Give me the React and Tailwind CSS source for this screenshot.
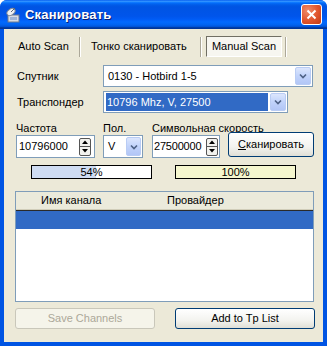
import React from 'react';

const titleGradient =
  'bg-[linear-gradient(to_bottom,#0058EE_0%,#3593FF_4%,#288EFF_6%,#127DFF_8%,#036FFC_10%,#0262EE_14%,#0057E5_20%,#0054E3_24%,#0055EB_56%,#005BF5_66%,#026AFE_76%,#0062EF_86%,#0052D6_92%,#0040AB_94%,#003092_100%)]';

const DropArrow = ({ className = '' }) => (
  <div
    className={`flex items-center justify-center rounded-[2px] border border-[#B9CCF4] bg-[linear-gradient(to_bottom,#DCE6FD,#C1D3FB_50%,#B2C6F6)] ${className}`}
  >
    <svg width="8" height="6" viewBox="0 0 8 6">
      <path d="M1 1.5 L4 4.5 L7 1.5" fill="none" stroke="#4D6185" strokeWidth="1.6" />
    </svg>
  </div>
);

const Spin = ({ className = '' }) => (
  <div className={`w-[12px] h-[18px] flex flex-col rounded-[2px] border border-[#555] bg-[#F2F2EE] ${className}`}>
    <div className="flex-1 flex items-center justify-center border-b border-[#555]">
      <svg width="6" height="4" viewBox="0 0 6 4">
        <path d="M0 4 L3 0.5 L6 4 Z" fill="#000" />
      </svg>
    </div>
    <div className="flex-1 flex items-center justify-center">
      <svg width="6" height="4" viewBox="0 0 6 4">
        <path d="M0 0 L3 3.5 L6 0 Z" fill="#000" />
      </svg>
    </div>
  </div>
);

const Sep = () => <div className="w-[2px] h-[20px] border-l border-[#ACA899] border-r border-r-white" />;

const XpButton = ({ children, disabled, className = '' }) => (
  <div
    className={`flex items-center justify-center rounded-[3px] border ${
      disabled
        ? 'border-[#C9C7BA] text-[#ACA899] bg-[#F5F4EA]'
        : 'border-[#003C74] text-black bg-[linear-gradient(to_bottom,#FFFFFF,#F3F3EF_60%,#E0DFD6)]'
    } ${className}`}
  >
    {children}
  </div>
);

export default function App() {
  return (
    <div className="w-[327px] h-[346px] flex flex-col bg-[#0054E3] rounded-t-[7px] overflow-hidden font-['Liberation_Sans',sans-serif] text-[11px] text-black select-none">
      {/* title bar */}
      <div className={`h-[29px] flex items-center pl-[5px] pr-[5px] ${titleGradient}`}>
        <svg width="16" height="16" viewBox="0 0 16 16" className="mt-[1px]">
          <rect x="3" y="8" width="11" height="7" fill="#D8DCE4" stroke="#6E7A8C" strokeWidth="1" />
          <rect x="5" y="10" width="7" height="3" fill="#9FB4D6" />
          <ellipse cx="6" cy="5" rx="4.5" ry="3" transform="rotate(-35 6 5)" fill="#EEF0F4" stroke="#7D8796" />
          <path d="M6 5 L10 1" stroke="#5A6472" strokeWidth="1" />
        </svg>
        <div className="ml-[4px] text-white font-bold text-[13px] tracking-[0.2px] [text-shadow:1px_1px_0_#0A1F73]">
          Сканировать
        </div>
        <div className="ml-auto w-[21px] h-[21px] rounded-[3px] border border-white bg-[radial-gradient(circle_at_30%_30%,#F08C6A,#E0542C_55%,#C23A14)] flex items-center justify-center">
          <svg width="11" height="11" viewBox="0 0 11 11">
            <path d="M1.5 1.5 L9.5 9.5 M9.5 1.5 L1.5 9.5" stroke="#fff" strokeWidth="2" />
          </svg>
        </div>
      </div>

      {/* body */}
      <div className="flex-1 mx-[4px] mb-[4px] bg-[#ECE9D8] flex flex-col pl-[11px] pr-[8px]">
        {/* tabs */}
        <div className="mt-[7px] h-[21px] flex items-center">
          <div className="w-[64px] pl-[3px]">Auto Scan</div>
          <Sep />
          <div className="w-[119px] pl-[10px]">Тонко сканировать</div>
          <Sep />
          <div className="ml-[4px] w-[76px] h-[21px] flex items-center justify-center border border-t-[#716F64] border-l-[#716F64] border-b-white border-r-white bg-[#F7F6F0]">
            Manual Scan
          </div>
          <div className="ml-[3px]">
            <Sep />
          </div>
        </div>

        {/* satellite */}
        <div className="mt-[8px] flex items-center">
          <div className="w-[88px] pl-[2px]">Спутник</div>
          <div className="w-[210px] h-[22px] flex items-center border border-[#7F9DB9] bg-white">
            <div className="flex-1 pl-[4px]">0130 - Hotbird 1-5</div>
            <DropArrow className="w-[16px] h-[18px] mr-[1px]" />
          </div>
        </div>

        {/* transponder */}
        <div className="mt-[4px] flex items-center">
          <div className="w-[88px] pl-[2px]">Транспондер</div>
          <div className="w-[185px] h-[22px] flex items-center border border-[#7F9DB9] bg-white">
            <div className="flex-1 h-[18px] ml-[2px] mr-[2px] flex items-center pl-[1px] bg-[#316AC5] text-white">
              10796 Mhz, V, 27500
            </div>
            <DropArrow className="w-[16px] h-[18px] mr-[1px]" />
          </div>
        </div>

        {/* frequency row */}
        <div className="mt-[8px] flex items-end">
          <div className="ml-[1px] w-[79px] flex flex-col">
            <div className="h-[14px] leading-[14px]">Частота</div>
            <div className="h-[23px] flex items-center border border-[#7F9DB9] bg-white">
              <div className="flex-1 pl-[2px]">10796000</div>
              <Spin className="mr-[3px]" />
            </div>
          </div>
          <div className="ml-[8px] w-[40px] flex flex-col">
            <div className="h-[14px] leading-[14px]">Пол.</div>
            <div className="h-[23px] flex items-center border border-[#7F9DB9] bg-white">
              <div className="flex-1 pl-[4px]">V</div>
              <DropArrow className="w-[15px] h-[19px] mr-[1px]" />
            </div>
          </div>
          <div className="ml-[9px] w-[68px] flex flex-col">
            <div className="h-[14px] leading-[14px] whitespace-nowrap">Символьная скорость</div>
            <div className="h-[23px] flex items-center border border-[#7F9DB9] bg-white">
              <div className="flex-1 pl-[1px] tracking-[-0.2px]">27500000</div>
              <Spin className="mr-[1px]" />
            </div>
          </div>
          <XpButton className="ml-[8px] mb-[1px] w-[86px] h-[25px]">
            <span>
              <span className="underline">С</span>канировать
            </span>
          </XpButton>
        </div>

        {/* progress */}
        <div className="mt-[7px] flex items-center">
          <div className="ml-[16px] w-[121px] h-[14px] border border-black bg-white relative flex items-center justify-center">
            <div className="absolute left-0 top-0 bottom-0 w-[54%] bg-[#CFDCF2]" />
            <span className="relative leading-[12px]">54%</span>
          </div>
          <div className="ml-[23px] w-[121px] h-[14px] border border-black bg-[#F5F6CE] flex items-center justify-center">
            <span className="leading-[12px]">100%</span>
          </div>
        </div>

        {/* list */}
        <div className="mt-[12px] w-[299px] h-[111px] border border-[#7F9DB9] bg-white flex flex-col">
          <div className="h-[18px] flex items-center bg-[#EBEADB] border-b border-[#D0CDB9]">
            <div className="w-[151px] pl-[25px]">Имя канала</div>
            <div>Провайдер</div>
          </div>
          <div className="h-[1px] bg-[#2A2A2A]" />
          <div className="h-[18px] bg-[#316AC5]" />
        </div>

        {/* buttons */}
        <div className="mt-[6px] flex">
          <XpButton disabled className="w-[140px] h-[21px]">
            Save Channels
          </XpButton>
          <XpButton className="ml-[20px] w-[140px] h-[21px]">Add to Tp List</XpButton>
        </div>
      </div>
    </div>
  );
}
